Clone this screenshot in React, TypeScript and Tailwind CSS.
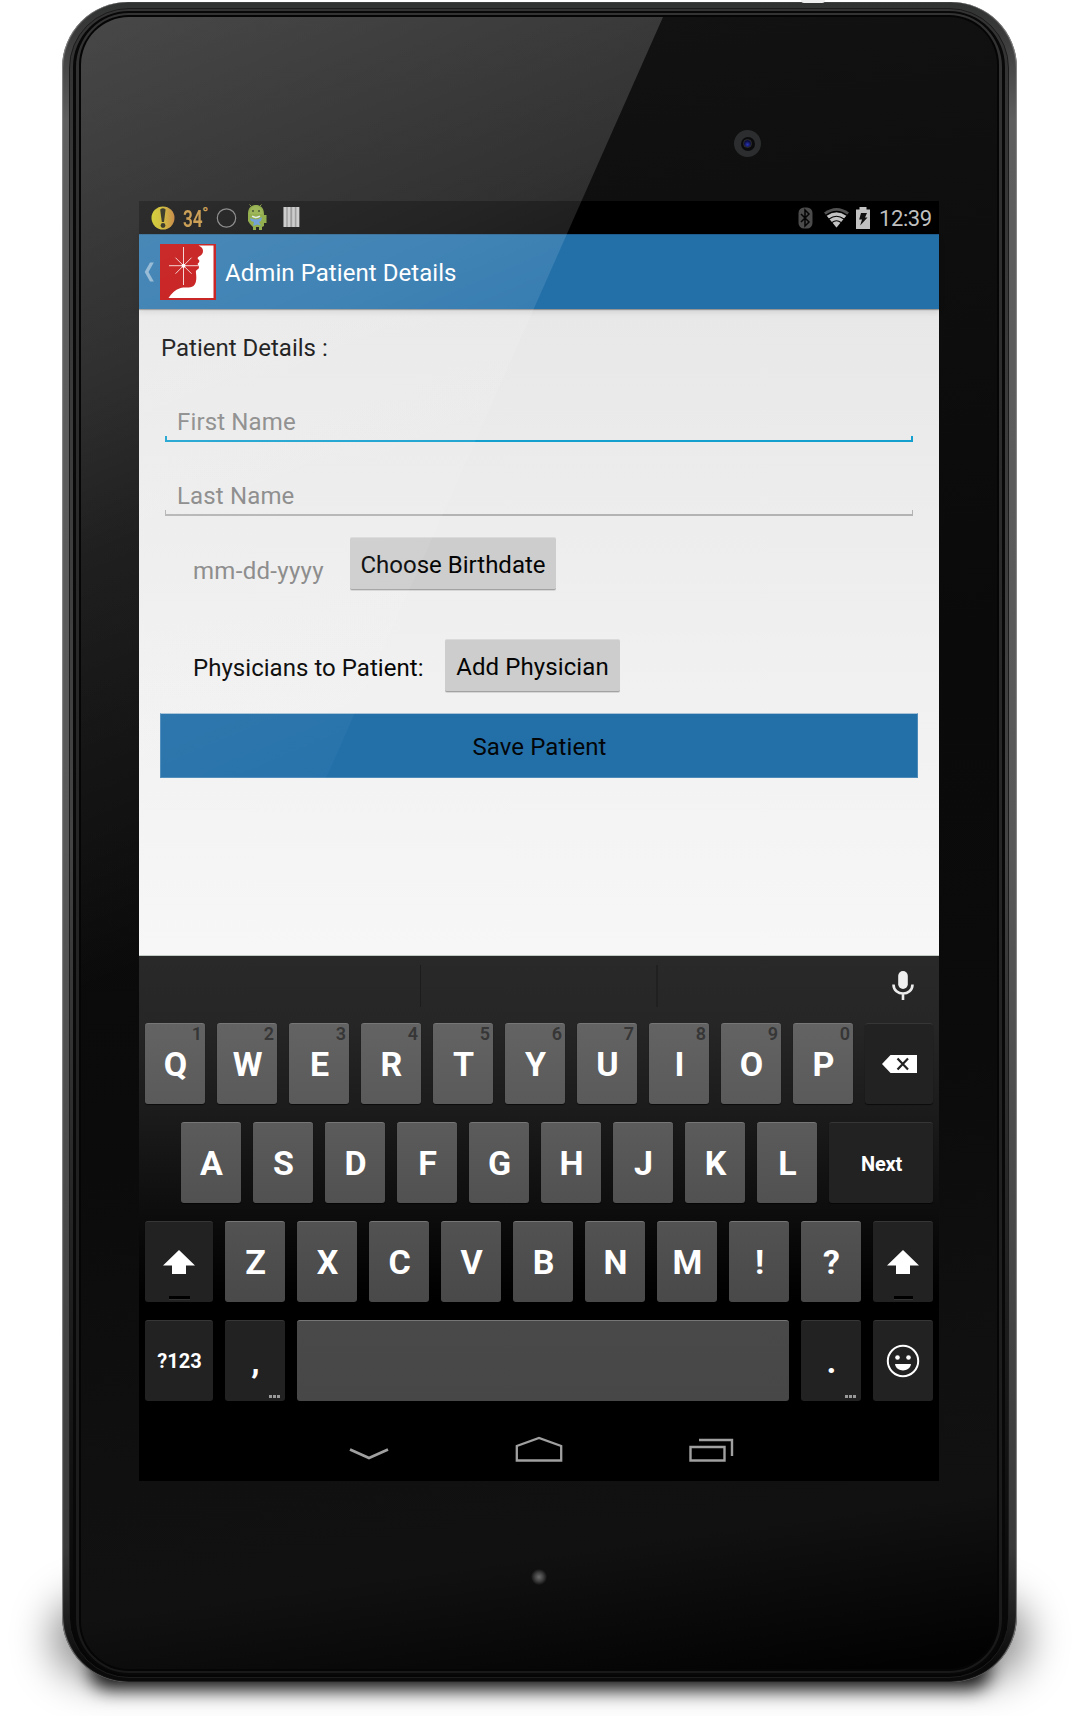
import React from "react";

const glare =
  "pointer-events-none absolute left-0 top-0 z-20 h-[1655px] w-[920px] [clip-path:polygon(0_0,582px_0,0_1314px)] [background:linear-gradient(157deg,rgba(255,255,255,0.225)_0px,rgba(255,255,255,0.14)_330px,rgba(255,255,255,0.08)_500px,rgba(255,255,255,0.03)_760px,rgba(255,255,255,0)_900px)]";

function StatusBar() {
  return (
    <div className="flex h-[33px] items-center bg-black text-[#bfbfbf]">
      <svg className="ml-3 shrink-0" width="24" height="26" viewBox="0 0 24 26">
        <defs>
          <linearGradient id="sun">
            <stop offset="0" stopColor="#cbc516" />
            <stop offset="0.5" stopColor="#c9b01c" />
            <stop offset="1" stopColor="#bd7527" />
          </linearGradient>
        </defs>
        <circle cx="12" cy="13" r="11.5" fill="url(#sun)" />
        <path d="M9.2 4.5Q12 2 14.6 4.5L13 17h-2.2z" fill="#181805" />
        <circle cx="12" cy="20.5" r="2.4" fill="#181805" />
      </svg>
      <span className="ml-[8px] flex w-[25px] shrink-0 text-2xl leading-none text-[#c28d35]">
        <span className="w-[19px] origin-left scale-x-[0.72] pt-[3px] font-semibold">34</span>
        <span className="mt-px text-[17px] font-bold">°</span>
      </span>
      <svg className="ml-[8px] shrink-0" width="21" height="22" viewBox="0 0 21 22">
        <circle cx="10.5" cy="11" r="9.2" fill="none" stroke="#777" strokeWidth="1.2" />
      </svg>
      <svg className="ml-[10px] shrink-0" width="21" height="27" viewBox="0 0 21 27">
        <path d="M4 2 2.5 .5M13 2l1.500-1.500" stroke="#72912b" />
        <path d="M1 10C1 3 5 1 9 1s8 2.500 8 9v1h2.500v8H17v3l-2 1v3h-3v-3H9v3H6v-3l-3-3-2-3z" fill="#7f9f2d" />
        <path d="M2.500 10C3 4 6 2.500 9 2.500s6 1.500 7 7.500z" fill="#8aa83a" />
        <circle cx="6" cy="7" r="1" fill="#29370f" />
        <circle cx="12" cy="7" r="1" fill="#29370f" />
        <path d="M3 14l4 1.300h4L15 13l-1 4-2 1 2 3.500-4-1-4 1.500 1-4-3-1z" fill="#5a91cf" />
        <path d="M5 12.200q4 2.500 8 0" stroke="#dbe7e4" strokeWidth="1.500" fill="none" />
      </svg>
      <svg className="ml-[15px] shrink-0" width="17" height="21" viewBox="0 0 17 21">
        <rect y="0" x=".5" width="16" height="20" fill="#8b8b8b" />
        <path d="M2 0v20M6 0v20M10.500 0v20M14.700 0v20" stroke="#c4c4c4" strokeWidth="2.600" />
      </svg>
      <div className="flex-1" />
      <svg className="shrink-0" width="15" height="22" viewBox="0 0 15 22">
        <rect x=".5" y=".5" width="14" height="21" rx="5.500" fill="#4b4b4b" />
        <path d="M3 7l8 8-4 4V3l4 4-8 8" fill="none" stroke="#050505" strokeWidth="1.500" />
      </svg>
      <svg className="ml-[11px] shrink-0" width="25" height="20" viewBox="0 0 25 20">
        <path d="M12.500 19.500 0 4.500Q12.500-4.500 25 4.500z" fill="#515151" />
        <path d="M12.500 19.500 2.800 7.800Q12.500 1 22.200 7.800z" fill="#c4c4c4" />
        <path d="M2 7.200Q12.500-.500 23 7.200M5 11Q12.500 5.500 20 11M8 14.500q4.500-3.500 9 0" fill="none" stroke="#000" strokeWidth="1.100" />
      </svg>
      <svg className="ml-[7px] shrink-0" width="14" height="22" viewBox="0 0 14 22">
        <path d="M3.500 0h7v2.500H14V22H0V2.500h3.500z" fill="#c2c2c2" />
        <path d="M5 6h6L9 10.500h2.500L4.200 18.500 6 12.500H3.200z" fill="#111" />
      </svg>
      <span className="ml-[9px] mr-[8px] w-[52px] whitespace-nowrap pt-px text-[22px] leading-[25px] tracking-[-0.4px]">
        12:39
      </span>
    </div>
  );
}

function ActionBar() {
  return (
    <div className="flex h-[75px] items-center border-t border-[#1d5c8c] bg-[#2370a9] shadow-[0_1px_1px_rgba(0,0,0,0.3),0_3px_6px_rgba(0,0,0,0.1)]">
      <svg className="ml-[5px] shrink-0" width="11" height="20" viewBox="0 0 11 20">
        <path d="M6 .500h3.800L4.500 10l5.300 9.500H6L.700 10z" fill="#86afcf" />
      </svg>
      <svg className="ml-[5px] shrink-0" width="56" height="56" viewBox="0 0 56 56">
        <rect width="56" height="56" fill="#c00101" />
        <path
          d="M38.500 1.500C42 3 43 5 43 7c0 3-2 4.500-4 5.500-2 1.500-1.500 2 0 3.500 1 2-.500 2.500-1.500 4 1 1.500 2.200 2.500 1 4.800-2 1.700-3 1.200-2.500 4.200.400 4 1 10-2.500 13-4 2.700-9 .500-13.500 2.300C15 46 11.500 49.500 8.500 54h45V1.500z"
          fill="#fff"
        />
        <path d="M23.500 3v38M9 21.700h30M15.500 13.700l16 16M31.500 13.700l-16 16" stroke="#f3cccc" strokeWidth="1" />
        <circle cx="23.500" cy="21.700" r="2" fill="#fff" />
      </svg>
      <h1 className="ml-[9px] whitespace-nowrap pt-[2px] text-2xl leading-7 tracking-[0.06px] text-white">
        Admin Patient Details
      </h1>
    </div>
  );
}

function Field({ label, active }: { label: string; active?: boolean }) {
  const tone = active ? "bg-[#14a0cf]" : "bg-[#b3b3b3]";
  return (
    <div className="h-[34px]">
      <div className="h-7 pl-3 text-2xl leading-7 tracking-[0.15px] text-[#868686]">{label}</div>
      <div className="flex items-stretch justify-between">
        <span className={`h-1 ${tone} ${active ? "w-[2px]" : "w-px"}`} />
        <span className={`h-1 ${tone} ${active ? "w-[2px]" : "w-px"}`} />
      </div>
      <div className={`h-[2px] ${tone}`} />
    </div>
  );
}

function GreyButton({ children, className }: { children: React.ReactNode; className: string }) {
  return (
    <button
      className={`h-[53px] shrink-0 whitespace-nowrap rounded-[2px] border-b border-t border-b-[#a2a2a2] border-t-[#dadada] bg-[#cdcdcd] pt-[3px] text-2xl leading-7 text-[#050505] shadow-[0_1px_0_#d6d6d6] ${className}`}
    >
      {children}
    </button>
  );
}

function Form() {
  return (
    <div className="flex h-[647px] flex-col border-b border-[#c3cbc5] bg-linear-to-b from-[#e8e8e8] to-[#f7f7f7] px-5">
      <p className="mt-[25px] h-7 pl-[2px] text-2xl leading-7 text-[#050505]">Patient Details :</p>
      <div className="mx-[6px] mt-[46px]">
        <Field label="First Name" active />
      </div>
      <div className="mx-[6px] mt-[40px]">
        <Field label="Last Name" />
      </div>
      <div className="mt-[21px] flex h-[54px] pl-[34px]">
        <span className="mt-5 w-[157px] whitespace-nowrap text-2xl leading-7 tracking-[0.3px] text-[#868686]">
          mm-dd-yyyy
        </span>
        <GreyButton className="w-[206px]">Choose Birthdate</GreyButton>
      </div>
      <div className="mt-[48px] flex h-[54px] pl-[34px]">
        <span className="mt-[15px] w-[252px] whitespace-nowrap text-2xl leading-7 tracking-[0.04px] text-[#050505]">
          Physicians to Patient:
        </span>
        <GreyButton className="w-[175px] tracking-[0.1px]">Add Physician</GreyButton>
      </div>
      <button className="ml-px mt-[20px] h-[65px] w-[758px] border border-t-[#a9c2d6] border-[#4c8aba] bg-[#2370a9] pl-px pt-[2px] text-2xl leading-7 tracking-[0.1px] text-[#030608]">
        Save Patient
      </button>
    </div>
  );
}

function Key({
  children,
  hint,
  dark,
  more,
  width = "w-[60px]",
  shade = "bg-[#5d5d5d]",
}: {
  children?: React.ReactNode;
  hint?: string;
  dark?: boolean;
  more?: boolean;
  width?: string;
  shade?: string;
}) {
  const look = dark ? "bg-[#222] border-t-[#363636]" : `${shade} border-t-[#767676]`;
  return (
    <div
      className={`relative flex h-[81px] shrink-0 items-center justify-center rounded-[3px] border-t text-[34px] font-bold leading-10 text-white shadow-[0_1px_1px_rgba(0,0,0,0.6)] ${look} ${width}`}
    >
      {typeof children === "string" ? <span className="pl-px">{children}</span> : children}
      {hint && (
        <span className="absolute right-[3px] top-0 text-lg font-semibold leading-[20px] text-[#363636]">{hint}</span>
      )}
      {more && (
        <span className="absolute bottom-[3px] right-[5px] flex gap-[1px]">
          <i className="size-[3px] bg-[#999]" />
          <i className="size-[3px] bg-[#999]" />
          <i className="size-[3px] bg-[#999]" />
        </span>
      )}
    </div>
  );
}

function Shift({ width, bar }: { width: string; bar: string }) {
  return (
    <Key dark width={width}>
      <svg width="32" height="24" viewBox="0 0 32 24">
        <path d="M16 0 32 15.500H23V24H9v-8.500H0z" fill="#fff" />
      </svg>
      <span className={`absolute bottom-[2px] h-1 border-b border-[#333] bg-black ${bar}`} />
    </Key>
  );
}

function Keyboard() {
  return (
    <div className="flex h-[450px] flex-col bg-[linear-gradient(#292929_0%,#262626_15%,#1b1b1b_35%,#0d0d0d_57%,#000_76%)] px-[6px]">
      <div className="flex h-[67px] items-start pt-[9px]">
        <span className="ml-[275px] h-[42px] w-px bg-[#1c1c1c]" />
        <span className="ml-[235px] h-[42px] w-[2px] bg-[#202020]" />
        <svg className="ml-[234px] mt-[6px]" width="22" height="30" viewBox="0 0 22 30">
          <rect x="6.200" y="0" width="9.600" height="18" rx="4.800" fill="#f0f0f0" />
          <path d="M1.500 13.500c0 12 19 12 19 0M11 22.500V29" fill="none" stroke="#ececec" strokeWidth="2.600" />
        </svg>
      </div>
      <div className="flex h-[99px] gap-3">
        {["Q", "W", "E", "R", "T", "Y", "U", "I", "O", "P"].map((k, i) => (
          <Key key={k} hint={String((i + 1) % 10)} shade="bg-linear-to-b from-[#636363] to-[#5a5a5a]">
            {k}
          </Key>
        ))}
        <Key dark width="w-[68px]">
          <svg width="35" height="18" viewBox="0 0 35 18">
            <path d="M0 9 8.500 0H35v18H8.500z" fill="#fff" />
            <path d="m15.500 3.500 10.500 11M26 3.500l-10.500 11" stroke="#222" strokeWidth="2.200" />
          </svg>
        </Key>
      </div>
      <div className="flex h-[99px] gap-3 pl-9">
        {["A", "S", "D", "F", "G", "H", "J", "K", "L"].map((k) => (
          <Key key={k} shade="bg-linear-to-b from-[#5b5b5b] to-[#515151]">
            {k}
          </Key>
        ))}
        <Key dark width="w-[104px]">
          <span className="pl-px pt-px text-[20px] tracking-[-0.2px]">Next</span>
        </Key>
      </div>
      <div className="flex h-[99px] gap-3">
        <Shift width="w-[68px]" bar="w-[21px]" />
        {["Z", "X", "C", "V", "B", "N", "M", "!", "?"].map((k) => (
          <Key key={k} shade="bg-linear-to-b from-[#525252] to-[#494949]">
            {k}
          </Key>
        ))}
        <Shift width="w-[60px]" bar="w-[19px]" />
      </div>
      <div className="flex gap-3">
        <Key dark width="w-[68px]">
          <span className="pl-px text-[20px]">?123</span>
        </Key>
        <Key dark more>
          ,
        </Key>
        <Key width="w-[492px]" shade="bg-linear-to-b from-[#494949] to-[#474747]" />
        <Key dark more>
          .
        </Key>
        <Key dark>
          <svg width="34" height="34" viewBox="0 0 34 34">
            <circle cx="17" cy="17" r="15.200" fill="none" stroke="#fff" strokeWidth="2" />
            <circle cx="11.500" cy="13.500" r="2.300" fill="#fff" />
            <circle cx="22.500" cy="13.500" r="2.300" fill="#fff" />
            <path d="M9 20h16c-1 8.500-15 8.500-16 0z" fill="#fff" />
          </svg>
        </Key>
      </div>
    </div>
  );
}

function NavBar() {
  return (
    <div className="flex h-[75px] items-start bg-black pt-[30px]">
      <svg className="ml-[210px] mt-[11px]" width="40" height="14" viewBox="0 0 40 14">
        <path d="M1 2.500 20 11 39 2.500" fill="none" stroke="#a0a0a0" strokeWidth="2.800" />
      </svg>
      <svg className="ml-[126px]" width="48" height="27" viewBox="0 0 48 27">
        <path d="M1.800 24.500V10L24 2l22.200 8v14.500z" fill="none" stroke="#a0a0a0" strokeWidth="2.300" />
      </svg>
      <svg className="ml-[125px]" width="46" height="27" viewBox="0 0 46 27">
        <path d="M2.500 11h34v13.500h-34zM11 4h33v16" fill="none" stroke="#a0a0a0" strokeWidth="2.400" />
      </svg>
    </div>
  );
}

export default function App() {
  return (
    <div className="relative flex h-[1716px] w-[1080px] flex-col items-start overflow-hidden bg-white pl-[62px] font-[Roboto,'Liberation_Sans',sans-serif]">
      <div className="absolute bottom-[38px] left-[52px] h-[80px] w-[976px] rounded-[50px] bg-black/45 blur-[20px]" />
      <div className="absolute bottom-[27px] left-[90px] h-[38px] w-[900px] rounded-[30px] bg-black/90 blur-[9px]" />
      {/* Tablet body: outer shell, rim and glass */}
      <div className="relative mt-[2px] h-[1680px] w-[955px] shrink-0 rounded-[66px] bg-[linear-gradient(#303231_0%,#3a3a3a_2%,#5e5e5e_7%,#585858_50%,#3a3a3a_92%,#0a0a0a_99%)] pb-[4px] pl-[7px] pr-[8px] pt-[6px] shadow-[inset_1px_0_1px_#888,inset_-1px_0_1px_#888]">
        <div className="h-full rounded-[60px] border border-[#1c1c1c] bg-linear-to-b from-[#333] via-[#444] via-50% to-[#050505] px-[3px] py-[2px]">
          <div className="h-full rounded-[56px] border-x-[3px] border-y-2 border-[#080808] bg-linear-to-b from-[#333] to-[#191919] px-[3px] py-[2px]">
            <div className="h-full rounded-[50px] bg-[#050505] p-[2px]">
              <div className="relative h-full overflow-hidden rounded-[48px] bg-[linear-gradient(172deg,#131313_0%,#0f0f0f_15%,#0a0a0a_42%,#0b0b0b_65%,#101010_82%,#111_90%,#020202_99%)] pl-[58px] pt-[184px]">
                <div className="w-[800px]">
                  <StatusBar />
                  <div className="relative">
                    <div className="relative z-10">
                      <ActionBar />
                    </div>
                    <Form />
                  </div>
                  <Keyboard />
                  <NavBar />
                </div>
                <div className={glare} />
                <div className="absolute left-[653px] top-[113px] flex size-[27px] items-center justify-center rounded-full bg-[#2b2d2e]">
                  <div className="flex size-[14px] items-center justify-center rounded-full bg-[#0b0b0d]">
                    <div className="size-[9px] rounded-full border border-[#303030] bg-[radial-gradient(circle_at_50%_65%,#2b35b5,#0b0d40_60%)]" />
                  </div>
                </div>
                <div className="absolute bottom-[84px] left-[450px] size-[16px] rounded-full bg-[radial-gradient(circle,#666_5%,#444_35%,transparent_72%)]" />
              </div>
            </div>
          </div>
        </div>
      </div>
      <div className="absolute left-[801px] top-0 h-[3px] w-[24px] rounded-b-full bg-[#eee]" />
    </div>
  );
}
